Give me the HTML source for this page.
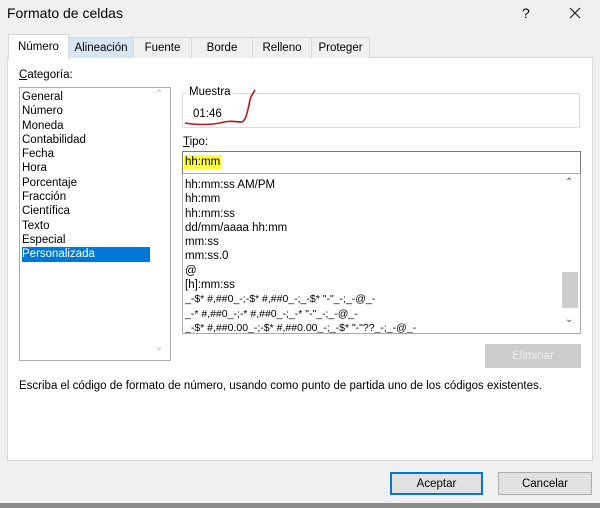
<!DOCTYPE html>
<html><head><meta charset="utf-8"><style>
*{margin:0;padding:0;box-sizing:border-box}
body{width:600px;height:508px;background:#f0f0f0;font-family:"Liberation Sans",sans-serif;font-size:11.5px;color:#000;position:relative;overflow:hidden}
.a{position:absolute;white-space:nowrap}
.tab{position:absolute;top:37px;height:21px;border:1px solid #d9d9d9;border-bottom:none;text-align:center;line-height:20px;background:#f0f0f0}
.list div{height:14.3px;line-height:14.3px}
</style></head><body>
<div class="a" style="left:7px;top:5px;font-size:14px">Formato de celdas</div>
<div class="a" style="left:522px;top:5px;font-size:14px">?</div>
<svg class="a" style="left:569px;top:7px" width="12" height="12"><path d="M1 1L11 11M11 1L1 11" stroke="#222" stroke-width="1.2"/></svg>
<div class="a" style="left:7px;top:57px;width:586px;height:404px;background:#fff;border:1px solid #d9d9d9"></div>
<div class="tab" style="left:68px;width:66px;background:#d8e6f2">Alineación</div>
<div class="tab" style="left:133px;width:59px">Fuente</div>
<div class="tab" style="left:191px;width:62px">Borde</div>
<div class="tab" style="left:252px;width:60px">Relleno</div>
<div class="tab" style="left:311px;width:59px">Proteger</div>
<div class="tab" style="left:8px;top:34px;width:61px;height:25px;background:#fff;border-color:#d9d9d9;line-height:25px">Número</div>
<div class="a" style="left:19px;top:69px"><u>C</u>ategoría:</div>
<div class="a" style="left:19px;top:87px;width:152px;height:274px;border:1px solid #adadad;background:#fff"></div>
<div class="a list" style="left:22px;top:90px;width:128px">
<div>General</div><div>Número</div><div>Moneda</div><div>Contabilidad</div><div>Fecha</div><div>Hora</div><div>Porcentaje</div><div>Fracción</div><div>Científica</div><div>Texto</div><div>Especial</div><div style="background:#0078d7;color:#fff">Personalizada</div></div>
<div class="a" style="left:155px;top:89px;color:#bbb;font-size:10px">⌃</div>
<div class="a" style="left:155px;top:342px;color:#bbb;font-size:10px">⌄</div>
<div class="a" style="left:182px;top:93px;width:398px;height:35px;border:1px solid #dcdcdc"></div>
<div class="a" style="left:187px;top:86px;background:#fff;padding:0 2px">Muestra</div>
<div class="a" style="left:193px;top:108px">01:46</div>
<svg class="a" style="left:180px;top:85px" width="80" height="45"><path d="M75 5 C72 10 70 12 69 20 C67 28 66 35 62 37 C55 37 50 35 40 38 C30 40 15 40 5 38" stroke="#c0141c" stroke-width="1.6" fill="none"/></svg>
<div class="a" style="left:183px;top:136px"><u>T</u>ipo:</div>
<div class="a" style="left:182px;top:151px;width:399px;height:23px;border:1px solid #7a7a7a;background:#fff"></div>
<div class="a" style="left:184px;top:155px;background:#ffff3c;padding:0 1px;line-height:15px">hh:mm</div>
<div class="a" style="left:182px;top:173px;width:399px;height:161px;border:1px solid #adadad;background:#fff"></div>
<div class="a list" style="left:185px;top:178px;font-size:11.5px">
<div>hh:mm:ss AM/PM</div><div>hh:mm</div><div>hh:mm:ss</div><div>dd/mm/aaaa hh:mm</div><div>mm:ss</div><div>mm:ss.0</div><div>@</div><div>[h]:mm:ss</div><div style="font-size:10.5px">_-$* #,##0_-;-$* #,##0_-;_-$* "-"_-;_-@_-</div><div style="font-size:10.5px">_-* #,##0_-;-* #,##0_-;_-* "-"_-;_-@_-</div><div style="font-size:10.5px;height:12px;overflow:hidden">_-$* #,##0.00_-;-$* #,##0.00_-;_-$* "-"??_-;_-@_-</div></div>
<div class="a" style="left:562px;top:272px;width:16px;height:36px;background:#cdcdcd"></div>
<div class="a" style="left:565px;top:177px;color:#555;font-size:10px">⌃</div>
<div class="a" style="left:565px;top:314px;color:#555;font-size:10px">⌄</div>
<div class="a" style="left:485px;top:344px;width:96px;height:24px;background:#ccc;color:#eee;text-align:center;line-height:24px">Eliminar</div>
<div class="a" style="left:19px;top:380px">Escriba el código de formato de número, usando como punto de partida uno de los códigos existentes.</div>
<div class="a" style="left:390px;top:472px;width:93px;height:23px;background:#e1e1e1;border:2px solid #0078d7;text-align:center;line-height:20px">Aceptar</div>
<div class="a" style="left:498px;top:472px;width:94px;height:23px;background:#e1e1e1;border:1px solid #adadad;text-align:center;line-height:22px">Cancelar</div>
<div class="a" style="left:0;top:503px;width:600px;height:5px;background:#8a8a8a"></div>
</body></html>
